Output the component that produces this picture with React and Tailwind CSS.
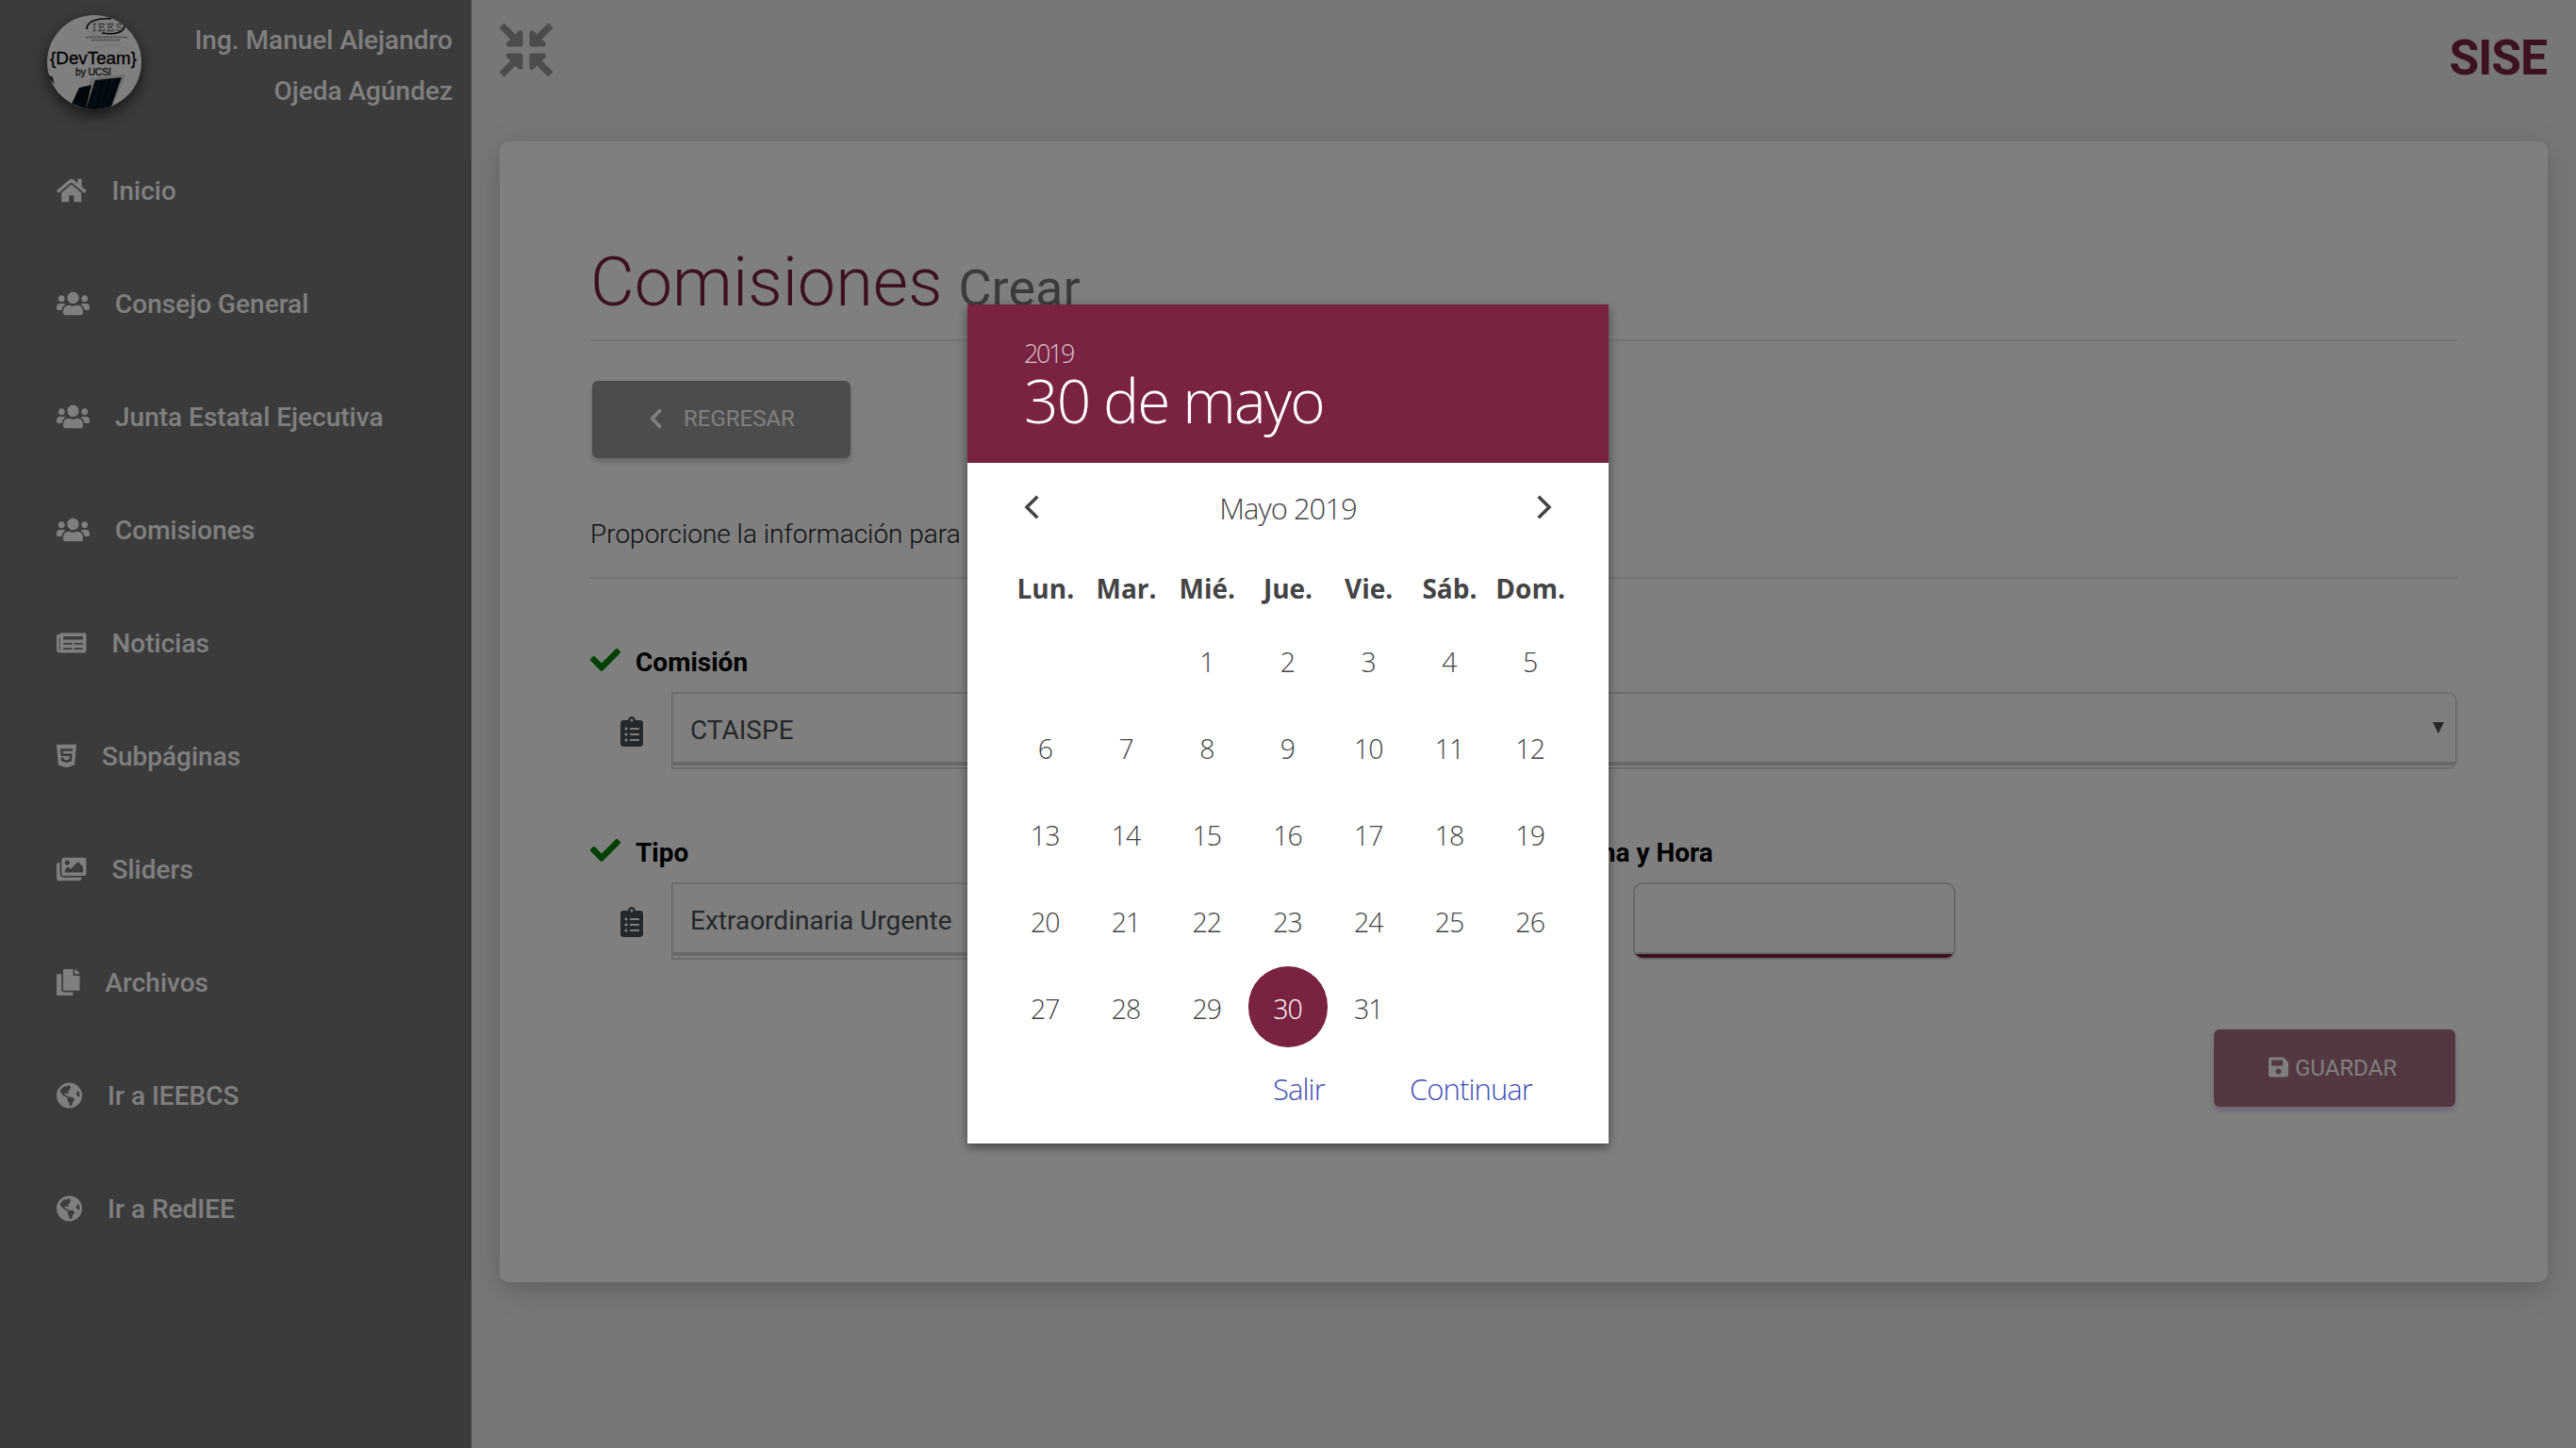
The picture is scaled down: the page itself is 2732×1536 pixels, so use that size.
import React from "react";
import {
  FaHome,
  FaUsers,
  FaNewspaper,
  FaHtml5,
  FaImages,
  FaCopy,
  FaGlobeAmericas,
  FaCompressArrowsAlt,
  FaChevronLeft,
  FaCheck,
  FaClipboardList,
  FaCalendarAlt,
  FaSave,
} from "react-icons/fa";

const menu = [
  { label: "Inicio", Icon: FaHome, width: "w-[31.5px]" },
  { label: "Consejo General", Icon: FaUsers, width: "w-[35px]" },
  { label: "Junta Estatal Ejecutiva", Icon: FaUsers, width: "w-[35px]" },
  { label: "Comisiones", Icon: FaUsers, width: "w-[35px]" },
  { label: "Noticias", Icon: FaNewspaper, width: "w-[31.5px]" },
  { label: "Subpáginas", Icon: FaHtml5, width: "w-[21px]" },
  { label: "Sliders", Icon: FaImages, width: "w-[31.5px]" },
  { label: "Archivos", Icon: FaCopy, width: "w-[24.5px]" },
  { label: "Ir a IEEBCS", Icon: FaGlobeAmericas, width: "w-[27.1px]" },
  { label: "Ir a RedIEE", Icon: FaGlobeAmericas, width: "w-[27.1px]" },
];

const weekdays = ["Lun.", "Mar.", "Mié.", "Jue.", "Vie.", "Sáb.", "Dom."];
const days = [null, null, ...Array.from({ length: 31 }, (_, i) => i + 1)];

function Avatar() {
  return (
    <svg
      viewBox="0 0 100 100"
      className="size-[100px] shrink-0 rounded-full bg-white shadow-[0_6px_16px_rgba(0,0,0,0.65)]"
    >
      <ellipse cx="62" cy="13" rx="20" ry="9.5" fill="none" stroke="#ddd" strokeWidth="1" />
      <path d="M42 15C42 6 54 3 68 4" fill="none" stroke="#111" strokeWidth="1.6" />
      <path d="M82 11C82 19 71 21 58 19" fill="none" stroke="#111" strokeWidth="1.6" />
      <text x="48" y="17" fontFamily="Liberation Serif, serif" fontSize="13" textLength="32" fill="#ccc" stroke="#555" strokeWidth="0.4">
        IEES
      </text>
      <path d="M41 23.5h44M47 26.5h30" stroke="#888" strokeWidth="1.4" strokeDasharray="2 0.6" />
      <path d="M50 35c10-4 26-4 36 1" fill="none" stroke="#e8e8e8" strokeWidth="1.5" />
      <path d="M0 62l6 4 2 8-3-4-5-3z" fill="#333" />
      <path d="M46 67l37-4-16 40H36z" fill="#ddd" />
      <path d="M34 77l13-3-6 26-15-6z" fill="#041018" />
      <path d="M51 69l28-3-12 34H41z" fill="#06141f" />
      <path d="M56 70l-8 28M63 69l-8 30M70 68l-9 31" stroke="#0d3550" strokeWidth="1" strokeDasharray="3 2" />
      <text x="3" y="52" fontFamily="Liberation Sans, sans-serif" fontSize="18.8" textLength="92" fill="#000" stroke="#000" strokeWidth="0.3">
        {"{DevTeam}"}
      </text>
      <text x="30" y="63.5" fontFamily="Liberation Sans, sans-serif" fontSize="10.6" textLength="38" fill="#222" stroke="#222" strokeWidth="0.3">
        by UCSI
      </text>
    </svg>
  );
}

function Sidebar() {
  return (
    <aside className="h-full w-[500px] shrink-0 bg-[#767676] font-medium text-[28px] text-white">
      <div className="flex h-[142px] items-start justify-between pt-4 pr-5 pl-[50px]">
        <Avatar />
        <p className="w-[300px] text-right leading-[54px]">Ing. Manuel Alejandro Ojeda Agúndez</p>
      </div>
      <nav>
        {menu.map(({ label, Icon, width }) => (
          <a key={label} className="flex h-[120px] items-center gap-[27px] pl-[60px]">
            <Icon className={`h-7 shrink-0 ${width}`} />
            <span className="pt-0.5">{label}</span>
          </a>
        ))}
      </nav>
    </aside>
  );
}

function Label({ children, valid = true }) {
  return (
    <label className="flex h-[42px] items-center gap-4 text-[28px] font-bold text-black">
      {valid && <FaCheck className="-mt-1 size-8 text-[green]" />}
      <span className="pt-0.5">{children}</span>
    </label>
  );
}

function Select({ value }) {
  return (
    <div className="mt-[11px] flex h-[82px]">
      <div className="flex w-[86px] items-center pt-0.5 pl-8 text-[#495057]">
        <FaClipboardList className="h-8 w-6" />
      </div>
      <div className="flex flex-1 flex-col overflow-hidden rounded-r-[10px] border-2 border-[#dadada] text-[#495057]">
        <div className="flex h-[72px] items-center justify-between pt-1 pr-3 pl-[18px]">
          <span className="pt-0.5 text-[28px]">{value}</span>
          <svg viewBox="0 0 12 12" className="-mt-1 size-3 fill-current">
            <path d="M0 0h12L6 12z" />
          </svg>
        </div>
        <div className="h-1 bg-[#d2d2d2]" />
      </div>
    </div>
  );
}

function Main() {
  return (
    <main className="flex-1 bg-[#eeeeee] px-[30px]">
      <header className="flex h-[150px] items-start justify-between">
        <FaCompressArrowsAlt className="mt-[25px] size-14 text-[#999]" />
        <h1 className="mt-8 mr-px text-[51.5px] leading-[60px] font-bold tracking-[-1px] text-[#792241]">SISE</h1>
      </header>

      <section className="h-[1210px] rounded-[10px] bg-white px-24 pt-[105px] shadow-[0_8px_16px_rgba(0,0,0,0.1),0_8px_40px_rgba(0,0,0,0.09)]">
        <h2 className="flex h-[90px] items-baseline gap-[17px] text-[72px] leading-[90px] font-light text-[#792241]">
          Comisiones
          <small className="text-[54px] font-normal text-[#777]">Crear</small>
        </h2>
        <hr className="mt-[15px] border-t-2 border-[#e6e6e6]" />

        <button className="mt-[42px] ml-0.5 flex h-[82px] w-[274px] items-center gap-[22px] rounded-md bg-[#999] pb-[3px] pl-[60px] text-2xl text-white shadow-[0_4px_6px_rgba(0,0,0,0.2)]">
          <FaChevronLeft className="h-6 w-[15px]" />
          <span className="pt-px">REGRESAR</span>
        </button>

        <p className="mt-[60px] text-[28px] leading-[42px] font-light text-[#212529]">
          Proporcione la información para
        </p>
        <hr className="mt-6 border-t-2 border-[#e6e6e6]" />

        <div className="mt-[67px]">
          <Label>Comisión</Label>
          <Select value="CTAISPE" />
        </div>

        <div className="mt-[67px] flex">
          <div className="w-[990px]">
            <Label>Tipo</Label>
            <Select value="Extraordinaria Urgente" />
          </div>
          <div className="ml-[30px]">
            <div className="pl-[7px]">
              <Label valid={false}>Fecha y Hora</Label>
            </div>
            <div className="mt-[11px] flex h-[82px]">
              <div className="flex w-[86px] items-center pl-6 text-[#495057]">
                <FaCalendarAlt className="h-8 w-7" />
              </div>
              <div className="flex w-[342px] flex-col justify-end overflow-hidden rounded-[10px] border-2 border-[#d2d2d2]">
                <div className="h-0.5 bg-[#d2d2d2]" />
                <div className="h-1 bg-[#792241]" />
              </div>
            </div>
          </div>
        </div>

        <button className="mt-[74px] mr-0.5 ml-auto flex h-[82px] w-64 items-center gap-[7px] rounded-md bg-[#792241] pb-0.5 pl-[58px] text-2xl text-white opacity-65 shadow-[0_4px_6px_rgba(121,34,165,0.35)]">
          <FaSave className="h-6 w-[21px]" />
          <span className="pt-px">GUARDAR</span>
        </button>
      </section>
    </main>
  );
}

function Chevron({ flip }) {
  return (
    <svg viewBox="0 0 16 26" className={flip ? "h-[26px] w-4 rotate-180" : "h-[26px] w-4"}>
      <path d="M14.3 1.7L3 13l11.3 11.3" fill="none" stroke="#444" strokeWidth="3.6" />
    </svg>
  );
}

function DatePicker() {
  return (
    <div className="h-[890px] w-[680px] bg-white font-['Open_Sans',sans-serif] font-light text-[#444] shadow-[0_4px_10px_rgba(0,0,0,0.45)]">
      <div className="h-[168px] bg-[#792241] px-[60px] pt-[34px] text-white">
        <div className="text-[27px] leading-9 tracking-[-2.4px] opacity-70">2019</div>
        <div className="text-[64px] leading-[64px] tracking-[-1.9px]">30 de mayo</div>
      </div>
      <div className="flex h-[77px] items-center justify-between px-[60px] pt-[17px]">
        <Chevron />
        <span className="pt-0.5 text-[31px] tracking-[-1px]">Mayo 2019</span>
        <Chevron flip />
      </div>
      <div className="mt-7 grid grid-cols-7 px-10 text-center text-[28px] leading-[56px] font-bold">
        {weekdays.map((d) => (
          <span key={d}>{d}</span>
        ))}
      </div>
      <div className="mt-1 grid grid-cols-7 px-10 text-[28.5px] tracking-[-1px]">
        {days.map((d, i) => (
          <div key={i} className="flex h-[92px] justify-center pt-px">
            <span
              className={
                d === 30
                  ? "flex h-[86px] w-[84px] items-center justify-center rounded-full bg-[#792241] pt-[5px] pr-px text-white"
                  : "flex h-[86px] w-[84px] items-center justify-center pt-[5px] pr-px"
              }
            >
              {d}
            </span>
          </div>
        ))}
      </div>
      <div className="mt-[9px] flex h-[60px] items-center justify-end gap-[90px] pr-[81px] text-[31px] tracking-[-0.9px] text-[#3f51b5]">
        <span>Salir</span>
        <span>Continuar</span>
      </div>
    </div>
  );
}

export default function App() {
  return (
    <div className="relative flex h-[1536px] w-[2732px] overflow-hidden font-[Roboto,sans-serif]">
      <Sidebar />
      <Main />
      <div className="absolute inset-0 flex items-center justify-center bg-black/50">
        <DatePicker />
      </div>
    </div>
  );
}
